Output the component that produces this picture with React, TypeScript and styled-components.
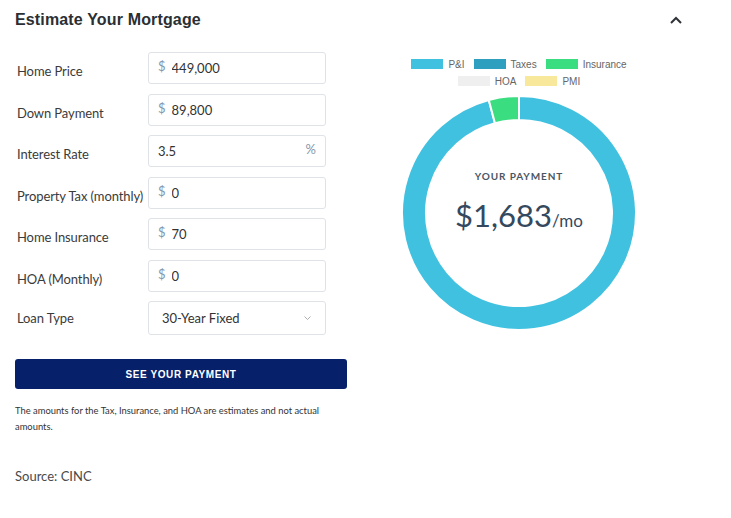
import React from "react";
import styled, { createGlobalStyle } from "styled-components";

const GlobalStyle = createGlobalStyle`
  html, body {
    margin: 0;
    padding: 0;
    background: #fff;
  }
  body {
    font-family: Lato, "Open Sans", sans-serif;
    color: #333;
  }
`;

const Page = styled.div`
  width: 731px;
  height: 518px;
  box-sizing: border-box;
`;

const Header = styled.header`
  display: flex;
  align-items: center;
  justify-content: space-between;
  height: 39px;
  padding: 1px 49px 0 15px;
  box-sizing: border-box;
`;

const Title = styled.h2`
  margin: 0;
  font-family: "Liberation Sans", Arial, sans-serif;
  font-weight: 700;
  font-size: 16px;
  letter-spacing: 0.15px;
  color: #2b2f33;
`;

const ToggleButton = styled.button`
  display: flex;
  align-items: center;
  justify-content: center;
  width: 12px;
  height: 8px;
  padding: 0;
  border: 0;
  background: none;
  cursor: pointer;
`;

const Body = styled.div`
  display: flex;
  gap: 15px;
  padding: 13px 0 0 15px;
`;

const FormColumn = styled.div`
  display: flex;
  flex-direction: column;
  width: 332px;
`;

const Fields = styled.div`
  display: flex;
  flex-direction: column;
  gap: 9.5px;
`;

const Row = styled.div`
  display: flex;
  align-items: center;
`;

const Label = styled.label<{ $flush?: boolean }>`
  width: 133px;
  padding: ${(p) => (p.$flush ? "0" : "6px")} 0 0 2px;
  box-sizing: border-box;
  font-size: 13px;
  color: #3b3b3b;
  white-space: nowrap;
  letter-spacing: -0.1px;
`;

const InputBox = styled.div<{ $tall?: boolean }>`
  display: flex;
  align-items: center;
  width: 178px;
  height: ${(p) => (p.$tall ? 34 : 32)}px;
  box-sizing: border-box;
  border: 1px solid #dfe3e7;
  border-radius: 3px;
  padding: 0 9px;
  background: #fff;
`;

const Affix = styled.span`
  font-size: 13px;
  color: #8398ac;
  position: relative;
  top: -2px;
`;

const Field = styled.input`
  flex: 1;
  min-width: 0;
  border: 0;
  outline: none;
  padding: 0 0 0 6px;
  font-family: Lato, sans-serif;
  font-size: 13px;
  color: #333;
  background: transparent;

  &[data-plain="true"] {
    padding-left: 0;
  }
`;

const SelectBox = styled(InputBox)`
  justify-content: space-between;
  padding: 0 14px 0 13px;
  font-size: 13px;
  color: #333;
`;

const SubmitButton = styled.button`
  margin-top: 24px;
  height: 30px;
  width: 332px;
  border: 0;
  border-radius: 3px;
  background: #06216a;
  color: #fff;
  font-family: "Liberation Sans", Arial, sans-serif;
  font-weight: 700;
  font-size: 10px;
  letter-spacing: 0.6px;
  cursor: pointer;
`;

const Disclaimer = styled.p`
  margin: 14px 0 0;
  font-size: 9.4px;
  line-height: 16px;
  color: #333;
`;

const Source = styled.p`
  margin: 31px 0 0;
  font-size: 13px;
  line-height: 20px;
  color: #4a4a4a;
`;

const ChartColumn = styled.div`
  display: flex;
  flex-direction: column;
  align-items: center;
  width: 314px;
`;

const Legend = styled.div`
  display: flex;
  flex-direction: column;
  align-items: center;
  gap: 3px;
  margin-top: 5px;
  font-family: "Liberation Sans", Arial, sans-serif;
  font-size: 10px;
  color: #666;
`;

const LegendRow = styled.div`
  display: flex;
  align-items: center;
  gap: 9px;
  height: 14px;
`;

const LegendItem = styled.span`
  display: flex;
  align-items: center;
  gap: 5px;
`;

const Swatch = styled.span<{ $color: string }>`
  display: inline-block;
  width: 32px;
  height: 10px;
  background: ${(p) => p.$color};
`;

const Donut = styled.div`
  position: relative;
  width: 236px;
  height: 236px;
  margin-top: 7px;
`;

const Center = styled.div`
  position: absolute;
  inset: 0;
  display: flex;
  flex-direction: column;
  align-items: center;
  justify-content: center;
  padding-bottom: 18px;
  box-sizing: border-box;
`;

const CenterLabel = styled.div`
  font-size: 10px;
  font-weight: 700;
  letter-spacing: 0.9px;
  color: #4b5663;
`;

const Amount = styled.div`
  margin-top: 15px;
  font-size: 31px;
  color: #34495e;
  line-height: 36px;

  span {
    font-size: 17px;
  }
`;

const fields = [
  { label: "Home Price", value: "449,000", prefix: "$" },
  { label: "Down Payment", value: "89,800", prefix: "$" },
  { label: "Interest Rate", value: "3.5", suffix: "%" },
  { label: "Property Tax (monthly)", value: "0", prefix: "$" },
  { label: "Home Insurance", value: "70", prefix: "$" },
  { label: "HOA (Monthly)", value: "0", prefix: "$" },
];

const legendRows = [
  [
    { name: "P&I", color: "#41c1e0" },
    { name: "Taxes", color: "#2e9fbe" },
    { name: "Insurance", color: "#3add7f" },
  ],
  [
    { name: "HOA", color: "#efefef" },
    { name: "PMI", color: "#f7e89c" },
  ],
];

const segments = [
  { value: 1613, color: "#41c1e0" },
  { value: 70, color: "#3add7f" },
];

const point = (c: number, r: number, deg: number) => {
  const a = (deg * Math.PI) / 180;
  return [c + r * Math.sin(a), c - r * Math.cos(a)];
};

const arcPath = (start: number, end: number, ro: number, ri: number, c: number) => {
  const large = end - start > 180 ? 1 : 0;
  const [x1, y1] = point(c, ro, start);
  const [x2, y2] = point(c, ro, end);
  const [x3, y3] = point(c, ri, end);
  const [x4, y4] = point(c, ri, start);
  return `M${x1} ${y1} A${ro} ${ro} 0 ${large} 1 ${x2} ${y2} L${x3} ${y3} A${ri} ${ri} 0 ${large} 0 ${x4} ${y4} Z`;
};

const DonutChart = () => {
  const total = segments.reduce((s, x) => s + x.value, 0);
  let angle = 0;
  return (
    <svg width="236" height="236" viewBox="0 0 236 236">
      {segments.map((s) => {
        const start = angle;
        angle += (s.value / total) * 360;
        return (
          <path
            key={s.color}
            d={arcPath(start, angle, 117, 93, 118)}
            fill={s.color}
            stroke="#fff"
            strokeWidth="2"
          />
        );
      })}
    </svg>
  );
};

export default function App() {
  return (
    <Page>
      <GlobalStyle />
      <Header>
        <Title>Estimate Your Mortgage</Title>
        <ToggleButton aria-label="Collapse">
          <svg width="12" height="8" viewBox="0 0 12 8">
            <path d="M1 7 L6 2 L11 7" fill="none" stroke="#2f3337" strokeWidth="2" />
          </svg>
        </ToggleButton>
      </Header>
      <Body>
        <FormColumn>
          <Fields>
            {fields.map((f) => (
              <Row key={f.label}>
                <Label>{f.label}</Label>
                <InputBox>
                  {f.prefix && <Affix>{f.prefix}</Affix>}
                  <Field defaultValue={f.value} data-plain={!f.prefix} />
                  {f.suffix && <Affix>{f.suffix}</Affix>}
                </InputBox>
              </Row>
            ))}
            <Row>
              <Label $flush>Loan Type</Label>
              <SelectBox $tall>
                <span>30-Year Fixed</span>
                <svg width="7" height="4" viewBox="0 0 7 4">
                  <path d="M0.5 0.5 L3.5 3.5 L6.5 0.5" fill="none" stroke="#9a9a9a" strokeWidth="0.8" />
                </svg>
              </SelectBox>
            </Row>
          </Fields>
          <SubmitButton>SEE YOUR PAYMENT</SubmitButton>
          <Disclaimer>
            The amounts for the Tax, Insurance, and HOA are estimates and not actual amounts.
          </Disclaimer>
          <Source>Source: CINC</Source>
        </FormColumn>
        <ChartColumn>
          <Legend>
            {legendRows.map((row, i) => (
              <LegendRow key={i}>
                {row.map((item) => (
                  <LegendItem key={item.name}>
                    <Swatch $color={item.color} />
                    {item.name}
                  </LegendItem>
                ))}
              </LegendRow>
            ))}
          </Legend>
          <Donut>
            <DonutChart />
            <Center>
              <CenterLabel>YOUR PAYMENT</CenterLabel>
              <Amount>
                $1,683<span>/mo</span>
              </Amount>
            </Center>
          </Donut>
        </ChartColumn>
      </Body>
    </Page>
  );
}
